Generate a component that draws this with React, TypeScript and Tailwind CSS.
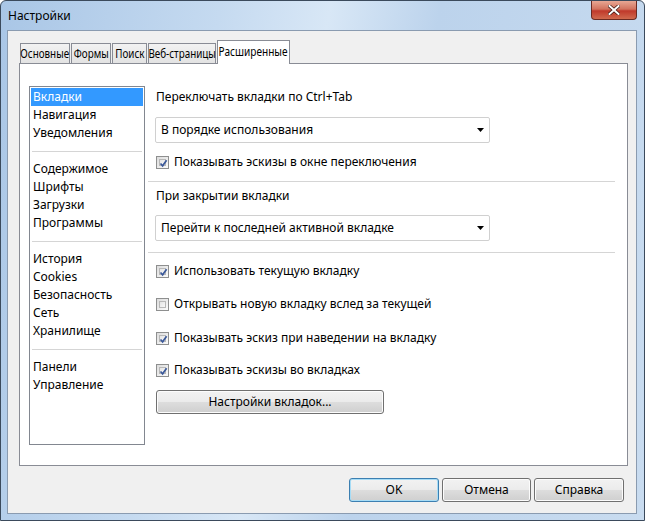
import React from 'react';

const font = { fontFamily: '"Noto Sans", "Open Sans", sans-serif' };

const listGroups = [
  ['Вкладки', 'Навигация', 'Уведомления'],
  ['Содержимое', 'Шрифты', 'Загрузки', 'Программы'],
  ['История', 'Cookies', 'Безопасность', 'Сеть', 'Хранилище'],
  ['Панели', 'Управление'],
];

const tabs = [
  { t: 'Основные', w: 'w-[50px]' },
  { t: 'Формы', w: 'w-[40px]' },
  { t: 'Поиск', w: 'w-[35px]' },
  { t: 'Веб-страницы', w: 'w-[68px]' },
];

function Checkbox({ checked }: { checked: boolean }) {
  return (
    <div className="w-[13px] h-[13px] border border-[#8e8f8f] bg-gradient-to-br from-[#dcdcdc] to-[#fbfbfb] p-[2px] shrink-0">
      <div className="w-full h-full border border-[#b8b8b8] bg-gradient-to-br from-[#e4e4e4] to-[#f8f8f8] relative">
        {checked && (
          <svg viewBox="0 0 9 9" className="absolute -left-[1px] -top-[1px] w-[9px] h-[9px]">
            <path d="M1.5 4.5 L3.6 6.8 L7.6 1.2" fill="none" stroke="#3a5899" strokeWidth="1.7" />
          </svg>
        )}
      </div>
    </div>
  );
}

function CheckRow({ checked, label, className }: { checked: boolean; label: string; className?: string }) {
  return (
    <div className={'flex items-center h-[16px] pl-[8px] ' + (className || '')}>
      <Checkbox checked={checked} />
      <span className="ml-[5px] text-[12px] text-black leading-[16px]">{label}</span>
    </div>
  );
}

function Select({ value, className }: { value: string; className?: string }) {
  return (
    <div
      className={
        'ml-[7px] w-[335px] h-[26px] border border-[#d0d0d0] rounded-[2px] bg-white flex items-center pl-[5px] pr-[5px] ' +
        (className || '')
      }
    >
      <span className="flex-1 text-[12px] text-black">{value}</span>
      <svg viewBox="0 0 7 4" className="w-[7px] h-[4px]">
        <path d="M0 0 H7 L3.5 4 Z" fill="#000" />
      </svg>
    </div>
  );
}

function Button({ label, def, className }: { label: string; def?: boolean; className?: string }) {
  return (
    <div
      className={
        'h-[24px] rounded-[3px] border flex items-center justify-center text-[12px] text-black bg-[linear-gradient(#f2f2f2_0%,#ebebeb_50%,#dddddd_51%,#cfcfcf_100%)] ' +
        (def ? 'border-[#3c7fb1] shadow-[inset_0_0_0_1px_#a6dcf6] ' : 'border-[#707070] shadow-[inset_0_0_0_1px_#fcfcfc] ') +
        (className || '')
      }
    >
      {label}
    </div>
  );
}

export default function App() {
  return (
    <div
      style={font}
      className="w-[645px] h-[521px] relative bg-[linear-gradient(100deg,#a9c6e6_0%,#c5daf0_30%,#d8e7f6_45%,#bcd3ec_60%,#c9dcf0_100%)] border border-[#3b4a5c] rounded-t-[6px] overflow-hidden"
    >
      {/* title bar */}
      <div className="h-[29px] flex items-center pl-[7px] text-[12px] text-black">Настройки</div>
      <div className="absolute right-[7px] top-0 w-[46px] h-[19px] rounded-b-[4px] border border-t-0 border-[#6a2a22] bg-[linear-gradient(#e8a794_0%,#d2735e_45%,#c0392b_55%,#d06a4e_100%)] flex items-center justify-center">
        <svg viewBox="0 0 12 10" className="w-[12px] h-[10px]">
          <path d="M1.5 1 L10.5 9 M10.5 1 L1.5 9" stroke="#3c1a14" strokeWidth="3.4" strokeLinecap="square" />
          <path d="M1.5 1 L10.5 9 M10.5 1 L1.5 9" stroke="#fff" strokeWidth="2" strokeLinecap="square" />
        </svg>
      </div>

      {/* client area */}
      <div className="ml-[6px] mr-[7px] h-[484px] bg-[#f0f0f0] border border-[#8a9bb0] relative">
        {/* tabs */}
        <div className="flex items-end h-[32px] pl-[12px]">
          {tabs.map(({ t, w }) => (
            <div
              key={t}
              className={
                'h-[20px] mr-[1px] border border-b-0 border-[#898c95] bg-[linear-gradient(#f2f2f2,#e3e3e3)] flex justify-center text-black ' +
                w
              }
            >
              <span className="inline-block text-[12px] leading-[19px] whitespace-nowrap scale-x-[0.82]">{t}</span>
            </div>
          ))}
          <div className="h-[24px] w-[73px] border border-b-0 border-[#898c95] bg-white flex justify-center text-black relative -mb-[1px] z-10">
            <span className="inline-block text-[12px] leading-[21px] whitespace-nowrap scale-x-[0.84]">Расширенные</span>
          </div>
        </div>

        {/* panel */}
        <div className="ml-[11px] w-[609px] h-[403px] border border-[#898c95] bg-white flex pt-[22px] pl-[9px]">
          <div className="w-[116px] h-[359px] border border-[#828790] p-[1px] shrink-0">
            {listGroups.map((g, gi) => (
              <div key={gi}>
                {gi > 0 && <div className="h-[18px] flex items-center px-[1px]"><div className="h-px w-full bg-[#d5d5d5]" /></div>}
                {g.map((item) => (
                  <div
                    key={item}
                    className={
                      'h-[18px] pl-[2px] text-[12px] leading-[18px] ' +
                      (item === 'Вкладки' ? 'bg-[#3399ff] text-white' : 'text-black')
                    }
                  >
                    {item}
                  </div>
                ))}
              </div>
            ))}
          </div>

          <div className="ml-[3px] w-[467px] pt-[3px]">
            <div className="pl-[8px] h-[16px] text-[12px] leading-[16px] text-black">Переключать вкладки по Ctrl+Tab</div>
            <Select value="В порядке использования" className="mt-[12px]" />
            <CheckRow checked label="Показывать эскизы в окне переключения" className="mt-[11px]" />
            <div className="mt-[11px] h-px bg-[#d5d5d5]" />
            <div className="mt-[6px] pl-[8px] h-[16px] text-[12px] leading-[16px] text-black">При закрытии вкладки</div>
            <Select value="Перейти к последней активной вкладке" className="mt-[11px]" />
            <div className="mt-[11px] h-px bg-[#d5d5d5]" />
            <CheckRow checked label="Использовать текущую вкладку" className="mt-[10px]" />
            <CheckRow checked={false} label="Открывать новую вкладку вслед за текущей" className="mt-[17px]" />
            <CheckRow checked label="Показывать эскиз при наведении на вкладку" className="mt-[18px]" />
            <CheckRow checked label="Показывать эскизы во вкладках" className="mt-[16px]" />
            <Button label="Настройки вкладок..." className="ml-[8px] mt-[12px] w-[228px]" />
          </div>
        </div>

        {/* bottom buttons */}
        <div className="flex justify-end pr-[12px] mt-[12px] gap-[3px]">
          <Button label="OK" def className="w-[90px]" />
          <Button label="Отмена" className="w-[89px]" />
          <Button label="Справка" className="w-[90px]" />
        </div>
      </div>
    </div>
  );
}
